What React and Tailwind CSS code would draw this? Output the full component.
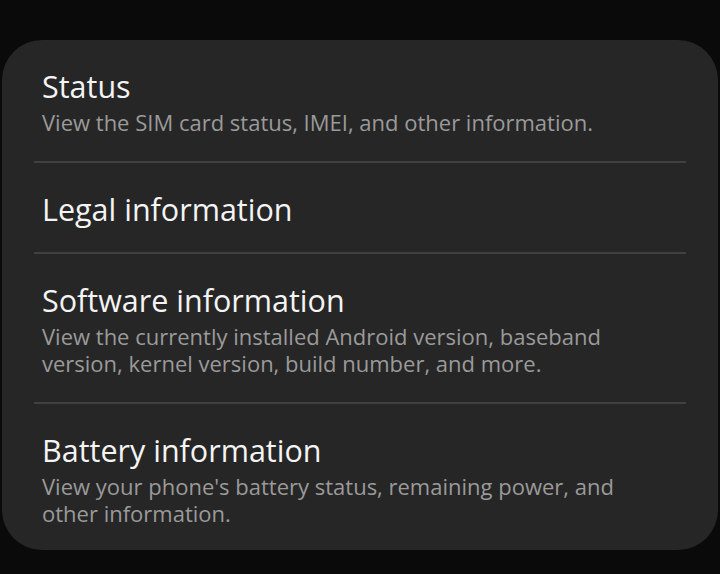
export default function App() {
  const items = [
    { t: "Status", s: ["View the SIM card status, IMEI, and other information."] },
    { t: "Legal information", s: [] },
    { t: "Software information", s: ["View the currently installed Android version, baseband", "version, kernel version, build number, and more."] },
    { t: "Battery information", s: ["View your phone's battery status, remaining power, and", "other information."] },
  ];
  return (
    <div className="w-[720px] h-[574px] bg-[#0a0a0a] pt-[40px] px-[2px]" style={{ fontFamily: '"Open Sans", sans-serif' }}>
      <div className="bg-[#262626] rounded-[40px] h-[510px] px-[32px]">
        {items.map((it, i) => (
          <div key={i} className={i < items.length - 1 ? "border-b-2 border-[#404040]" : ""}>
            <div className="px-[8px] pt-[28px] pb-[25px]">
              <div className="text-[30.5px] leading-[36px] text-[#f4f4f4]">{it.t}</div>
              {it.s.length > 0 && (
                <div className="mt-[5px] text-[22px] leading-[27px] text-[#9a9a9a]">
                  {it.s.map((l, j) => (<div key={j}>{l}</div>))}
                </div>
              )}
            </div>
          </div>
        ))}
      </div>
    </div>
  );
}
